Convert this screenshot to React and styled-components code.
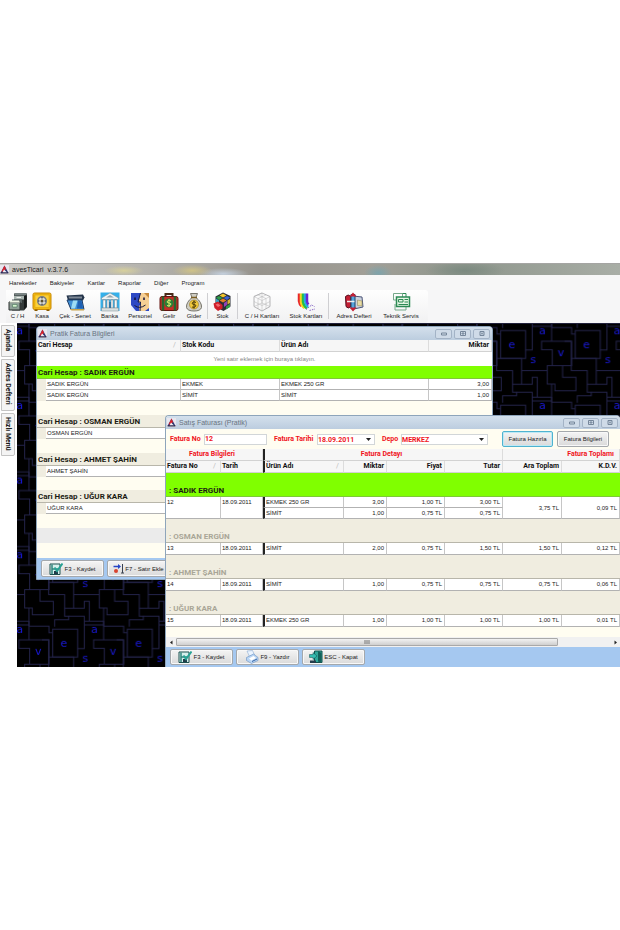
import React from 'react';
import styled, { createGlobalStyle } from 'styled-components';

const GlobalStyle = createGlobalStyle`
  * {
    box-sizing: border-box;
  }

  body {
    margin: 0;
    background: #fff;
    color: #1a1a1a;
    font: 6px/10px 'Liberation Sans', sans-serif;
  }

  button,
  input,
  select {
    margin: 0;
    padding: 0;
    border: 0;
    background: none;
    color: inherit;
    font: inherit;
  }

  svg {
    display: block;
    flex: none;
  }
`;

const Page = styled.main`
  padding: 263px 0;
  overflow: hidden;
`;

/* ---------- application frame ---------- */

const AppTitle = styled.header`
  display: flex;
  align-items: center;
  gap: 3px;
  height: 12px;
  font-size: 7px;
  background:
    radial-gradient(ellipse 20px 5px at 20% 60%, #d6cf9c, transparent),
    radial-gradient(ellipse 20px 6px at 31% 60%, #cfc287, transparent),
    radial-gradient(ellipse 26px 6px at 36% 90%, #c3cfdd, transparent),
    radial-gradient(ellipse 14px 8px at 61% 80%, #7da3ab, transparent),
    radial-gradient(ellipse 40px 9px at 75% 60%, #7b8a80, transparent),
    linear-gradient(to right, #cfcecb 0%, #b3b1ab 25%, #96938c 42%, #a19f97 60%, #8e968c 75%, #a9aea6 100%);
  border-top: 1px solid #a5a5a3;
`;

const MenuBar = styled.nav`
  display: flex;
  gap: 13px;
  height: 15px;
  padding: 0 9px;
  align-items: center;
  background: #f7f7f7;
`;

const ToolBar = styled.div`
  display: flex;
  height: 33px;
  padding-left: 6px;
  background: #f6f6f7;
`;

const ToolStrip = styled.div`
  display: flex;
  padding-right: 4px;
  border-radius: 0 3px 3px 0;
  background: linear-gradient(#fefefe, #f1f1f2);
`;

const Tool = styled.button`
  display: flex;
  flex-direction: column;
  align-items: center;
  width: ${(p) => p.$width}px;
  padding-top: 2px;
  line-height: 9px;
  white-space: nowrap;
`;

const Divider = styled.span`
  width: 1px;
  margin: 3px 1px 4px;
  background: #cfcfd2;
`;

const Workspace = styled.div`
  display: flex;
  height: 344px;
`;

const SideTabs = styled.aside`
  display: flex;
  flex-direction: column;
  gap: 2px;
  width: 17px;
  padding: 2px 1px 0;
  background: #fff;
`;

const SideTab = styled.button`
  width: 14px;
  padding: 3px 0 5px;
  writing-mode: vertical-rl;
  text-align: left;
  font: bold 7px/12px 'Roboto', sans-serif;
  background: #f4f4f4;
  border: 1px solid #c4c4c4;
  border-radius: 0 2px 2px 0;
`;

const Desktop = styled.section`
  position: relative;
  flex: 1;
  overflow: hidden;
  background: #000;
  border-top: 1px solid #20203a;
`;

const Wallpaper = styled.svg`
  width: 100%;
  height: 100%;
`;

/* ---------- child windows ---------- */

const Window = styled.section`
  position: absolute;
  overflow: hidden;
  background: #fffdf1;
  border: 1px solid #8ea5bb;
  border-radius: 4px 4px 0 0;
`;

const LedgerWindow = styled(Window)`
  left: 19px;
  top: 2px;
  width: 457px;
`;

const InvoiceWindow = styled(Window)`
  left: 148px;
  top: 91px;
  right: 0;
  bottom: 0;
  display: flex;
  flex-direction: column;
  border-right: 0;
  border-bottom: 0;
`;

const WindowTitle = styled.header`
  display: flex;
  align-items: center;
  gap: 3px;
  height: 13px;
  padding: 0 2px 0 1px;
  color: #68737f;
  font-size: 7px;
  background: linear-gradient(#d4e0ec, #bccddf);

  h2 {
    flex: 1;
    margin: 0;
    font: inherit;
  }
`;

const WindowControl = styled.button`
  display: grid;
  place-items: center;
  width: 17px;
  height: 10px;
  margin-left: -1px;
  color: #75869a;
  background: #cfdbe8;
  border: 1px solid #a3b3c6;
  border-radius: 2px;
`;

const ButtonBar = styled.footer`
  display: flex;
  gap: 3px;
  padding: 2px 4px;
  background: #a5c8f0;
`;

const Button = styled.button`
  display: flex;
  align-items: center;
  justify-content: center;
  gap: 1px;
  width: ${(p) => p.$width || 63}px;
  height: ${(p) => p.$height || 16}px;
  white-space: nowrap;
  background: linear-gradient(#f4f4f4, #dadada);
  border: 1px solid ${(p) => (p.$active ? '#4fb3d0' : '#a4a8ac')};
  border-radius: 2px;
  box-shadow: inset 0 0 0 1px ${(p) => (p.$active ? '#bfe9f5' : '#f8f8f8')};
`;

/* ---------- grids ---------- */

const Grid = styled.table`
  width: 100%;
  table-layout: fixed;
  border-collapse: separate;
  border-spacing: 0;
  white-space: nowrap;
`;

const HeadCell = styled.th`
  height: 12px;
  padding: 0 2px 0 1px;
  overflow: hidden;
  color: #111;
  font: bold 7px/11px 'Roboto', sans-serif;
  text-align: ${(p) => p.$align || 'left'};
  background: #f6f6f6;
  border-right: 1px solid #dcdcdc;
  border-bottom: 1px solid #d2d2d2;
`;

const BandCell = styled(HeadCell)`
  padding-right: 5px;
  color: #f0141c;
`;

const SortMark = styled.span`
  float: right;
  padding-right: 2px;
  color: #bbb;
  font-weight: normal;
`;

const Cell = styled.td`
  height: ${(p) => p.$height || 11}px;
  padding: 0 2px 0 1px;
  line-height: 10px;
  text-align: ${(p) => p.$align || 'left'};
  vertical-align: ${(p) => p.$valign || 'top'};
  background: #fff;
  border-right: 1px solid #c6c6c6;
  border-bottom: 1px solid #b2b2b2;
`;

const MarkCell = styled(Cell)`
  border-left: 2px solid #222;
`;

const MarkHead = styled(HeadCell)`
  border-left: 2px solid #222;
`;

const MarkBand = styled(BandCell)`
  border-left: 2px solid #222;
`;

const IndentCell = styled.td`
  padding: 0;
  background: #f0ede0;
`;

const HintCell = styled.td`
  height: 14px;
  padding: 0;
  color: #858585;
  text-align: center;
  background: #fff;
`;

const GroupCell = styled.th`
  height: ${(p) => p.$height || 13}px;
  padding: 0 1px;
  color: ${(p) => (p.$muted ? '#a9a697' : '#1c1c14')};
  font: bold 8px/11px 'Roboto', sans-serif;
  text-align: left;
  vertical-align: bottom;
  background: ${(p) => (p.$active ? '#80ff00' : '#f0ede0')};
  border-bottom: 1px solid ${(p) => (p.$active ? '#7fc838' : '#b8b6aa')};
`;

const SpacerCell = styled.td`
  height: ${(p) => p.$height}px;
  padding: 0;
  background: ${(p) => (p.$footer ? '#ebebeb' : '#fffdf1')};
`;

/* ---------- invoice form ---------- */

const Form = styled.form`
  display: flex;
  align-items: center;
  height: 20px;
  padding-left: 4px;
  color: #f0141c;
  font: bold 7px/10px 'Roboto', sans-serif;
`;

const Label = styled.label`
  padding-right: 2px;
  white-space: nowrap;
  width: ${(p) => p.$width}px;
`;

const Field = styled.span`
  display: flex;
  align-items: center;
  width: ${(p) => p.$width}px;
  height: 11px;
  margin-right: 7px;
  padding-right: 3px;
  background: #fff;
  border: 1px solid #d2d6d8;

  input,
  select {
    flex: 1;
    width: 0;
    height: 9px;
    appearance: none;
    outline: 0;
  }
`;

const FormButtons = styled.div`
  display: flex;
  gap: 4px;
  margin-left: 7px;
  color: #1a1a1a;
  font: 6px/10px 'Liberation Sans', sans-serif;
`;

const ScrollBar = styled.div`
  display: grid;
  grid-template-columns: 10px 1fr 10px;
  align-items: center;
  justify-items: center;
  height: 10px;
  margin-top: auto;
  background: #f1f1f1;
`;

const Track = styled.div`
  width: 100%;
`;

const Thumb = styled.div`
  display: grid;
  place-items: center;
  width: 88%;
  height: 8px;
  background: linear-gradient(#f2f2f2, #cfcfcf);
  border: 1px solid #a9a9a9;
  border-radius: 1px;
`;

/* ---------- drawings ---------- */

const Logo = () => (
  <svg width="9" height="9" viewBox="0 0 18 18">
    <rect width="18" height="18" fill="#e9e6ee" />
    <path d="M9 1 17 16H1z" fill="#2b3470" />
    <path d="M9 1 12 8 7 13 3 13z" fill="#d8232c" />
    <path d="M8 9 14 15H5z" fill="#f4f1f4" />
    <path d="M1 15H17V17H1z" fill="#2a2440" />
  </svg>
);

const Cabinet = () => (
  <svg width="20" height="20" viewBox="0 0 40 40">
    <path d="M12 3H38V30L32 37H8L12 18z" fill="#333a3a" />
    <path d="M14 2H36L38 7H12z" fill="#7b8585" />
    <path d="M12 8H32V15H12z" fill="#a9b5b0" />
    <path d="M8 15H28V22H8z" fill="#586464" />
    <path d="M2 20H24V36H2z" fill="#8fa197" stroke="#2c3030" strokeWidth="2" />
    <path d="M5 17H22L24 21H3z" fill="#eef6e4" />
    <path d="M9 25H18V30H9z" fill="#d5f5ce" stroke="#356548" />
    <path d="M17 10H26V12H17z" fill="#eee" />
    <path d="M32 8 37 6V30L32 35z" fill="#15191a" />
  </svg>
);

const Safe = () => (
  <svg width="20" height="20" viewBox="0 0 40 40">
    <rect x="2" y="2" width="36" height="33" rx="3" fill="#f2b90e" stroke="#c98905" strokeWidth="2" />
    <rect x="6" y="6" width="28" height="25" fill="#fbd13a" stroke="#dc9d08" />
    <path d="M5 35H11V38H5zM29 35H35V38H29z" fill="#8a5a00" />
    <circle cx="20" cy="18" r="10" fill="#777b80" />
    <circle cx="20" cy="18" r="7" fill="#d9dbd8" />
    <circle cx="20" cy="18" r="3" fill="#5a5030" />
    <path d="M20 10V13M20 23V26M12 18H15M25 18H28" stroke="#333" strokeWidth="2" />
  </svg>
);

const Cheque = () => (
  <svg width="20" height="20" viewBox="0 0 40 40">
    <path d="M3 7 36 5 39 11 36 17H6z" fill="#24344a" />
    <path d="M7 9H34V13H8z" fill="#7d8896" />
    <path d="M4 16H34L38 35H12z" fill="#3f8fd6" stroke="#1d3a64" strokeWidth="2" />
    <path d="M16 17H25L20 33H12z" fill="#9ddcf5" />
    <path d="M26 18H33L36 33H24z" fill="#1e60b4" />
    <path d="M10 34H38V37H13z" fill="#c7a24b" />
  </svg>
);

const Bank = () => (
  <svg width="20" height="20" viewBox="0 0 40 40">
    <rect x="1" y="1" width="38" height="37" fill="#35b0ea" />
    <path d="M20 2 37 12V15H3V12z" fill="#eef2f3" stroke="#7a8992" />
    <path d="M12 11 20 6 28 11z" fill="#97a5ad" />
    <path d="M6 16H11V32H6zM14 16H18V32H14zM22 16H26V32H22zM29 16H34V32H29z" fill="#f6f8f8" stroke="#72818a" />
    <path d="M3 32H37V38H3z" fill="#d9dfe0" stroke="#7a8992" />
    <path d="M19 20H21V32H19z" fill="#234b78" />
  </svg>
);

const Faces = () => (
  <svg width="20" height="20" viewBox="0 0 40 40">
    <rect x="2" y="2" width="36" height="36" fill="#2d49c4" />
    <path d="M21 2H38V32L30 38H18V28L22 24 17 20z" fill="#f6cf94" />
    <path d="M21 2 16 20H21L20 38" fill="none" stroke="#121a4d" strokeWidth="2" />
    <path d="M9 27Q19 35 31 26" fill="none" stroke="#1a1a3a" strokeWidth="2" />
    <path d="M10 11V16M28 11V16" stroke="#10103a" strokeWidth="3" />
    <path d="M2 26 12 38H2z" fill="#e8efff" />
    <path d="M28 2H38V12z" fill="#c88a3c" />
  </svg>
);

const Case = () => (
  <svg width="20" height="20" viewBox="0 0 40 40">
    <path d="M13 9V4H27V9" fill="none" stroke="#4a2a18" strokeWidth="4" />
    <rect x="2" y="9" width="36" height="28" rx="4" fill="#c22f27" stroke="#641411" strokeWidth="2" />
    <path d="M8 9V37M32 9V37" stroke="#26662d" strokeWidth="5" />
    <circle cx="20" cy="22" r="9" fill="#2b7d36" />
    <path d="M24 18Q20 15 17 18T20 22T23 26T16 27M20 14V30" fill="none" stroke="#d5e86a" strokeWidth="2" />
  </svg>
);

const MoneyBag = () => (
  <svg width="20" height="20" viewBox="0 0 40 40">
    <path d="M13 3H27L24 11Q36 21 35 31 33 38 20 38T5 31Q4 21 16 11z" fill="#cfcdc3" stroke="#77756c" strokeWidth="2" />
    <path d="M14 11H26" stroke="#7a5d20" strokeWidth="3" />
    <circle cx="20" cy="25" r="9" fill="#f1c93c" stroke="#8a6a10" />
    <path d="M24 21Q20 18 17 21T20 25T23 29T16 30M20 17V33" fill="none" stroke="#4a3a08" strokeWidth="2" />
  </svg>
);

const Cubes = () => (
  <svg width="20" height="20" viewBox="0 0 40 40">
    <path d="M20 1 35 8V29L21 38 5 30V9z" fill="#292d35" />
    <path d="M20 3 27 7 20 11 13 7z" fill="#f0c52d" />
    <path d="M12 8 19 12 12 16 6 11z" fill="#2e9c48" />
    <path d="M28 8 34 11 28 16 21 12z" fill="#3a62d4" />
    <path d="M20 13 27 17 20 21 13 17z" fill="#e27d25" />
    <path d="M6 13 12 17V24L6 21z" fill="#33a7c9" />
    <path d="M22 22 28 18V26L22 30z" fill="#8e42b8" />
    <path d="M29 17 34 14V22L29 25z" fill="#d5b038" />
    <path d="M1 23 10 19 19 26V33L10 38 3 32z" fill="#cf1e2a" />
    <path d="M26 29 34 24V30L26 35z" fill="#2f9a48" />
    <path d="M5 25 10 23 15 27 10 30z" fill="#f06a70" />
  </svg>
);

const WireCube = () => (
  <svg width="20" height="20" viewBox="0 0 40 40" fill="none" stroke="#b4b4b6">
    <path d="M20 2 36 9V29L20 38 4 29V9z" strokeWidth="2" />
    <path d="M4 9 20 17 36 9M20 17V38M4 19 20 27 36 19M12 6 28 13V34M28 6 12 13V34" />
    <path d="M4 9 20 2V22L4 29M20 22 36 29" />
  </svg>
);

const Rainbow = () => (
  <svg width="20" height="20" viewBox="0 0 40 40" fill="none" strokeWidth="5">
    <path d="M6 3V18Q7 25 11 28" stroke="#e9262c" />
    <path d="M10 3V20Q11 28 17 32" stroke="#f8d51f" />
    <path d="M14 3V20Q16 29 22 33" stroke="#24c045" />
    <path d="M18 3V18Q20 26 24 30" stroke="#25a8e8" />
    <path d="M22 3V18Q22 22 25 25" stroke="#6a28d0" />
    <path d="M20 35 30 27M27 37 38 34M31 26 37 29" stroke="#8a6cc8" strokeWidth="2" strokeDasharray="3 2" />
  </svg>
);

const AddressBook = () => (
  <svg width="20" height="20" viewBox="0 0 40 40">
    <path d="M18 8 36 10 38 30 20 34z" fill="#ccd2de" stroke="#4b5578" strokeWidth="2" />
    <path d="M27 16 36 18V28L27 27z" fill="#e8dca5" stroke="#8b8150" />
    <path d="M3 9Q8 3 14 9V29Q8 35 4 29z" fill="#c41f34" stroke="#561020" strokeWidth="2" />
    <path d="M14 5H22V33H14z" fill="#56a4dc" stroke="#1a4064" strokeWidth="2" />
    <path d="M18 1 25 9H11zM18 39 25 31H11z" fill="#c41f34" />
    <path d="M6 19H21" stroke="#eee" strokeWidth="3" />
  </svg>
);

const Service = () => (
  <svg width="20" height="20" viewBox="0 0 40 40" fill="none" stroke="#2d8a55" strokeWidth="2">
    <path d="M5 3H23V10M5 3V16H11M8 24V36H30V29" stroke="#76a98a" />
    <rect x="11" y="10" width="26" height="19" fill="#e5f6e4" strokeWidth="3" />
    <path d="M15 15H24V20H15zM27 15H34M27 20H34M15 25H34" />
    <path d="M23 3H30V10" />
  </svg>
);

const SaveIcon = () => (
  <svg width="14" height="14" viewBox="0 0 28 28">
    <path d="M2 4H22V25H2z" fill="#d6f0ec" stroke="#1c5250" strokeWidth="2" />
    <path d="M6 5V24M6 14H20" stroke="#31857d" strokeWidth="3" />
    <path d="M10 18H18V24H10z" fill="#203a48" />
    <path d="M11 11 16 18 27 3" fill="none" stroke="#28a394" strokeWidth="4" />
  </svg>
);

const AddRowIcon = () => (
  <svg width="11" height="11" viewBox="0 0 22 22">
    <path d="M1 7H13" stroke="#2746c6" strokeWidth="3" />
    <path d="M10 2 16 7 10 12z" fill="#2746c6" />
    <circle cx="6" cy="16" r="4" fill="#d8432e" />
    <path d="M19 2V20M16 20H22" stroke="#38404e" strokeWidth="2" />
  </svg>
);

const PrintIcon = () => (
  <svg width="14" height="14" viewBox="0 0 28 28">
    <path d="M4 2 15 1 19 10 9 13z" fill="#eaf4ff" stroke="#7a9cc8" />
    <path d="M3 15 17 8 26 15V21L13 27 3 21z" fill="#b9d5f4" stroke="#5480b8" />
    <path d="M8 17 17 12 22 16 13 21z" fill="#fff" />
    <path d="M14 23 24 18" stroke="#3563a4" strokeWidth="2" />
  </svg>
);

const ExitIcon = () => (
  <svg width="14" height="14" viewBox="0 0 28 28">
    <path d="M11 2H26V25H11z" fill="#2fa79a" stroke="#14504c" strokeWidth="2" />
    <path d="M18 2 25 6V26L18 23z" fill="#14605a" />
    <path d="M1 9H8V5L16 12 8 19V15H1z" fill="#34bdb0" stroke="#124a50" />
    <path d="M2 21H14V26H2z" fill="#243d4c" />
  </svg>
);

const Arrow = ({ d }) => (
  <svg width="5" height="5" viewBox="0 0 10 10" fill="#222">
    <path d={d} />
  </svg>
);

const controls = [
  ['Simge durumuna küçült', 'M1 4H11V8H1z'],
  ['Ekranı kapla', 'M1 1H11V9H1zM4 4H8V6H4z'],
  ['Kapat', 'M2 1H10V9H2zM4 3L8 7M8 3L4 7'],
];

const WindowControls = () =>
  controls.map(([name, d]) => (
    <WindowControl key={name} aria-label={name}>
      <svg width="6" height="5" viewBox="0 0 12 10" fill="none" stroke="currentColor" strokeWidth="2">
        <path d={d} />
      </svg>
    </WindowControl>
  ));

const offsets = [[0, 0], [-224, 0], [0, -224], [-224, -224], [0, 224]];

const Maze = () => (
  <Wallpaper aria-hidden="true">
    <defs>
      <g id="maze">
        <g fill="none" stroke="#23234a" strokeWidth="3">
          <path d="M32 25H107V108H32zM155 57H245V130H187V82H155z" />
          <path d="M107 83H127V0M185 0V57M127 12H185M185 16H245V35H256" />
          <path d="M20 108H95V186M95 145H172" />
          <path d="M187 130H172V185H195V205H258V165H218V130H240" />
          <path d="M0 57H20V145H68V210H80V220H38V241" />
          <path d="M68 186H127V165H142V225M80 210H127V225H185V185M127 225V240M185 225V240" />
        </g>
        <g fill="#1818d8" fontFamily="DejaVu Sans, sans-serif" fontSize="33">
          <text x="55" y="77">e</text>
          <text x="147" y="37">a</text>
          <text x="203" y="103">v</text>
          <text x="121" y="122">s</text>
        </g>
      </g>
      <pattern
        id="maze-tile"
        width="224"
        height="224"
        patternUnits="userSpaceOnUse"
        patternTransform="scale(0.3333) translate(75 -5)"
      >
        {offsets.map(([x, y]) => (
          <use key={`${x}${y}`} href="#maze" x={x} y={y} />
        ))}
      </pattern>
    </defs>
    <rect width="100%" height="100%" fill="url(#maze-tile)" />
  </Wallpaper>
);

/* ---------- data ---------- */

const menu = ['Hareketler', 'Bakiyeler', 'Kartlar', 'Raporlar', 'Diğer', 'Program'];

const tools = [
  { label: 'C / H', icon: Cabinet, width: 23 },
  { label: 'Kasa', icon: Safe, width: 26 },
  { label: 'Çek - Senet', icon: Cheque, width: 40 },
  { label: 'Banka', icon: Bank, width: 29 },
  { label: 'Personel', icon: Faces, width: 32 },
  { label: 'Gelir', icon: Case, width: 26 },
  { label: 'Gider', icon: MoneyBag, width: 24 },
  null,
  { label: 'Stok', icon: Cubes, width: 27 },
  null,
  { label: 'C / H Kartları', icon: WireCube, width: 46 },
  { label: 'Stok Kartları', icon: Rainbow, width: 42 },
  null,
  { label: 'Adres Defteri', icon: AddressBook, width: 48 },
  { label: 'Teknik Servis', icon: Service, width: 46 },
];

const accounts = [
  { name: 'OSMAN ERGÜN', gap: 14 },
  { name: 'AHMET ŞAHİN', gap: 14 },
  { name: 'UĞUR KARA', gap: 13 },
];

const invoices = [
  { no: 13, name: 'OSMAN ERGÜN', item: 'SİMİT', qty: '2,00', price: '0,75 TL', total: '1,50 TL', vat: '0,12 TL' },
  { no: 14, name: 'AHMET ŞAHİN', item: 'SİMİT', qty: '1,00', price: '0,75 TL', total: '0,75 TL', vat: '0,06 TL' },
  { no: 15, name: 'UĞUR KARA', item: 'EKMEK 250 GR', qty: '1,00', price: '1,00 TL', total: '1,00 TL', vat: '0,01 TL' },
];

const Ledger = () => (
  <LedgerWindow>
    <WindowTitle>
      <Logo />
      <h2>Pratik Fatura Bilgileri</h2>
      <WindowControls />
    </WindowTitle>
    <Grid>
      <colgroup>
        <col width="9" />
        <col width="135" />
        <col width="99" />
        <col width="149" />
        <col />
      </colgroup>
      <thead>
        <tr>
          <HeadCell colSpan={2}>Cari Hesap<SortMark>/</SortMark></HeadCell>
          <HeadCell>Stok Kodu</HeadCell>
          <HeadCell>Ürün Adı</HeadCell>
          <HeadCell $align="right">Miktar</HeadCell>
        </tr>
      </thead>
      <tbody>
        <tr>
          <HintCell colSpan={5}>Yeni satır eklemek için buraya tıklayın.</HintCell>
        </tr>
        <tr>
          <GroupCell colSpan={5} $active>Cari Hesap : SADIK ERGÜN</GroupCell>
        </tr>
        <tr>
          <IndentCell />
          <Cell>SADIK ERGÜN</Cell>
          <Cell>EKMEK</Cell>
          <Cell>EKMEK 250 GR</Cell>
          <Cell $align="right">3,00</Cell>
        </tr>
        <tr>
          <IndentCell />
          <Cell>SADIK ERGÜN</Cell>
          <Cell>SİMİT</Cell>
          <Cell>SİMİT</Cell>
          <Cell $align="right">1,00</Cell>
        </tr>
        {accounts.map(({ name, gap }) => (
          <React.Fragment key={name}>
            <tr>
              <SpacerCell colSpan={5} $height={gap} />
            </tr>
            <tr>
              <GroupCell colSpan={5}>Cari Hesap : {name}</GroupCell>
            </tr>
            <tr>
              <IndentCell />
              <Cell>{name}</Cell>
              <Cell />
              <Cell />
              <Cell />
            </tr>
          </React.Fragment>
        ))}
        <tr>
          <SpacerCell colSpan={5} $height={14} />
        </tr>
        <tr>
          <SpacerCell colSpan={5} $height={15} $footer />
        </tr>
        <tr>
          <SpacerCell colSpan={5} $height={15} />
        </tr>
      </tbody>
    </Grid>
    <ButtonBar>
      <Button $height={17}><SaveIcon />F3 - Kaydet</Button>
      <Button $height={17}><AddRowIcon />F7 - Satır Ekle</Button>
    </ButtonBar>
  </LedgerWindow>
);

const Invoice = () => (
  <InvoiceWindow>
    <WindowTitle>
      <Logo />
      <h2>Satış Faturası (Pratik)</h2>
      <WindowControls />
    </WindowTitle>
    <Form onSubmit={(e) => e.preventDefault()}>
      <Label htmlFor="no" $width={34}>Fatura No</Label>
      <Field $width={63}>
        <input id="no" defaultValue="12" />
      </Field>
      <Label htmlFor="date" $width={43}>Fatura Tarihi</Label>
      <Field $width={58}>
        <select id="date"><option>18.09.2011</option></select>
        <Arrow d="M0 2H10L5 8z" />
      </Field>
      <Label htmlFor="depot" $width={19}>Depo</Label>
      <Field $width={87}>
        <select id="depot"><option>MERKEZ</option></select>
        <Arrow d="M0 2H10L5 8z" />
      </Field>
      <FormButtons>
        <Button type="button" $width={51} $active>Fatura Hazırla</Button>
        <Button type="button" $width={52}>Fatura Bilgileri</Button>
      </FormButtons>
    </Form>
    <Grid>
      <colgroup>
        <col width="55" />
        <col width="42" />
        <col width="81" />
        <col width="43" />
        <col width="58" />
        <col width="58" />
        <col width="59" />
        <col />
      </colgroup>
      <thead>
        <tr>
          <BandCell colSpan={2} $align="center">Fatura Bilgileri</BandCell>
          <MarkBand colSpan={4} $align="center">Fatura Detayı</MarkBand>
          <BandCell colSpan={2} $align="right">Fatura Toplamı</BandCell>
        </tr>
        <tr>
          <HeadCell>Fatura No<SortMark>/</SortMark></HeadCell>
          <HeadCell>Tarih</HeadCell>
          <MarkHead>Ürün Adı<SortMark>/</SortMark></MarkHead>
          <HeadCell $align="right">Miktar</HeadCell>
          <HeadCell $align="right">Fiyat</HeadCell>
          <HeadCell $align="right">Tutar</HeadCell>
          <HeadCell $align="right">Ara Toplam</HeadCell>
          <HeadCell $align="right">K.D.V.</HeadCell>
        </tr>
      </thead>
      <tbody>
        <tr>
          <GroupCell colSpan={8} $height={24} $active>&nbsp;: SADIK ERGÜN</GroupCell>
        </tr>
        <tr>
          <Cell rowSpan={2}>12</Cell>
          <Cell rowSpan={2}>18.09.2011</Cell>
          <MarkCell>EKMEK 250 GR</MarkCell>
          <Cell $align="right">3,00</Cell>
          <Cell $align="right">1,00 TL</Cell>
          <Cell $align="right">3,00 TL</Cell>
          <Cell rowSpan={2} $align="right" $valign="middle">3,75 TL</Cell>
          <Cell rowSpan={2} $align="right" $valign="middle">0,09 TL</Cell>
        </tr>
        <tr>
          <MarkCell>SİMİT</MarkCell>
          <Cell $align="right">1,00</Cell>
          <Cell $align="right">0,75 TL</Cell>
          <Cell $align="right">0,75 TL</Cell>
        </tr>
        {invoices.map((row) => (
          <React.Fragment key={row.no}>
            <tr>
              <GroupCell colSpan={8} $height={24} $muted>&nbsp;: {row.name}</GroupCell>
            </tr>
            <tr>
              <Cell $height={12}>{row.no}</Cell>
              <Cell>18.09.2011</Cell>
              <MarkCell>{row.item}</MarkCell>
              <Cell $align="right">{row.qty}</Cell>
              <Cell $align="right">{row.price}</Cell>
              <Cell $align="right">{row.total}</Cell>
              <Cell $align="right">{row.total}</Cell>
              <Cell $align="right">{row.vat}</Cell>
            </tr>
          </React.Fragment>
        ))}
      </tbody>
    </Grid>
    <ScrollBar>
      <Arrow d="M7 1V9L2 5z" />
      <Track>
        <Thumb>
          <svg width="6" height="4" viewBox="0 0 6 4" stroke="#777">
            <path d="M0 1H6M0 3H6" />
          </svg>
        </Thumb>
      </Track>
      <Arrow d="M3 1V9L8 5z" />
    </ScrollBar>
    <ButtonBar>
      <Button><SaveIcon />F3 - Kaydet</Button>
      <Button><PrintIcon />F9 - Yazdır</Button>
      <Button><ExitIcon />ESC - Kapat</Button>
    </ButtonBar>
  </InvoiceWindow>
);

const App = () => (
  <Page>
    <GlobalStyle />
    <AppTitle>
      <Logo />
      <span>avesTicari&nbsp; v.3.7.6</span>
    </AppTitle>
    <MenuBar>
      {menu.map((item) => (
        <button key={item}>{item}</button>
      ))}
    </MenuBar>
    <ToolBar>
      <ToolStrip>
        {tools.map((tool, i) =>
          tool ? (
            <Tool key={tool.label} $width={tool.width}>
              <tool.icon />
              {tool.label}
            </Tool>
          ) : (
            <Divider key={i} />
          )
        )}
      </ToolStrip>
    </ToolBar>
    <Workspace>
      <SideTabs>
        <SideTab>Ajanda</SideTab>
        <SideTab>Adres Defteri</SideTab>
        <SideTab>Hızlı Menü</SideTab>
      </SideTabs>
      <Desktop>
        <Maze />
        <Ledger />
        <Invoice />
      </Desktop>
    </Workspace>
  </Page>
);

export default App;
